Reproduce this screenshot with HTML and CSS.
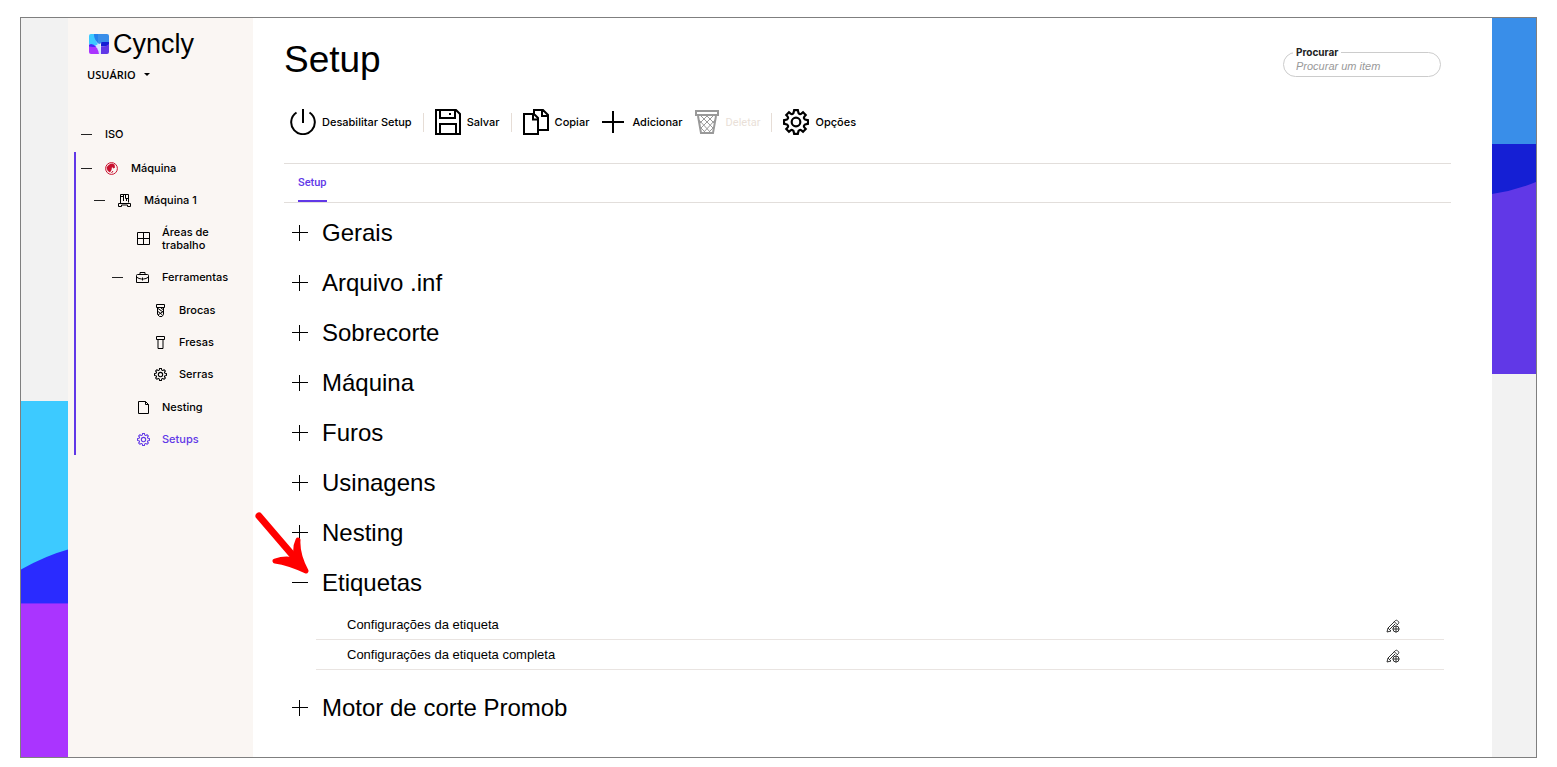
FILE: index.html
```html
<!DOCTYPE html>
<html lang="pt-BR">
<head>
<meta charset="utf-8">
<title>Setup - Cyncly</title>
<link rel="stylesheet" href="styles.css">
</head>
<body>
<svg class="sprite" aria-hidden="true">
  <symbol id="gear" viewBox="-12 -12 24 24"><path d="M-1.700 -11H1.700L2.300 -8.300Q3.600 -6.700 5 -7.700L6.500 -9L9 -6.500L7.700 -5Q6.700 -3.600 8.300 -2.300L11 -1.700V1.700L8.300 2.300Q6.700 3.600 7.700 5L9 6.500L6.500 9L5 7.700Q3.600 6.700 2.300 8.300L1.700 11H-1.700L-2.300 8.300Q-3.600 6.700 -5 7.700L-6.500 9L-9 6.500L-7.700 5Q-6.700 3.600 -8.300 2.300L-11 1.700V-1.700L-8.300 -2.300Q-6.700 -3.600 -7.700 -5L-9 -6.500L-6.500 -9L-5 -7.700Q-3.600 -6.700 -2.300 -8.300Z"/><circle r="4"/></symbol>
  <symbol id="plus" viewBox="0 0 18 18"><path d="M1 8.500H17M8.500 1V17"/></symbol>
  <symbol id="minus" viewBox="0 0 18 18"><path d="M1 8.500H17"/></symbol>
  <symbol id="edit" viewBox="0 0 14 14"><path d="M1 13L2 9L9.500 1.500Q10.500 .8 11.600 1.800L12.400 2.600Q13.200 3.600 12.400 4.600L11 6M1 13L5 12M2 9L5 12M8.300 2.700L11.300 5.700M3.500 10.500L9 5"/><circle cx="10" cy="10" r="3"/><path d="M10 6.500V13.500M6.500 10H13.500"/></symbol>
</svg>
<div class="frame">
  <div class="strip">
    <svg class="strip-art strip-art-bottom" viewBox="0 0 47 357" preserveAspectRatio="none" aria-hidden="true">
      <rect width="47" height="204" fill="#3dcaff"/><path d="M0 169Q25 155 47 149V204H0Z" fill="#2a2bff"/><rect y="203" width="47" height="154" fill="#aa34ff"/>
    </svg>
  </div>
  <aside class="sidebar">
    <div class="brand">
      <svg class="brand-mark" viewBox="0 0 20 20" aria-hidden="true">
        <path d="M2 0H8L11 9Q12 15 12 20H10L7 13L0 10V2Q0 0 2 0Z" fill="#d5e6ff"/>
        <path d="M2 0H6Q5 5 9 10L6 12L0 10V2Q0 0 2 0Z" fill="#3dcaff"/>
        <path d="M5 0H18Q20 0 20 2V9H13L10 10Q5 6 5 0Z" fill="#398ee9"/>
        <path d="M5 0H9V6L9 9Q5 5 5 0Z" fill="#2381ec"/>
        <path d="M13 8H20V11Q17 13 12 12.500V10Q12 8 13 8Z" fill="#151fd4"/>
        <path d="M12 12.500Q17 13 20 10V18Q20 20 18 20H12Z" fill="#6138e7"/>
        <path d="M0 11H4Q9 13 10 20H2Q0 20 0 18Z" fill="#aa34ff"/>
        <path d="M0 10.500Q4 9 7 13Q4 13 0 12.500Z" fill="#422bfa"/>
      </svg>
      <span class="brand-name">Cyncly</span>
    </div>
    <button class="user" type="button">USUÁRIO <span class="caret"></span></button>
    <nav class="tree" aria-label="Navegação">
      <a class="row" href="#"><span class="dash"></span><span class="label">ISO</span></a>
      <div class="group">
        <a class="row" href="#"><span class="dash"></span>
          <svg class="icon globe" viewBox="0 0 13 13" aria-hidden="true"><circle cx="6.500" cy="6.500" r="5.900"/><path class="solid" d="M7 1.500L9.500 2.500L10 5.500L8.500 6.500L7 5L6.500 8L5 10.500Q2 9 1.500 6Q3 2 7 1.500Z"/><path d="M6.500 11L8 9"/></svg>
          <span class="label">Máquina</span></a>
        <div class="level level-1">
          <a class="row" href="#"><span class="dash"></span>
            <svg class="icon" viewBox="0 0 13 13" aria-hidden="true"><path d="M2.500 9V.500H10.500V8.500M2.500 2.500H5.500M5.500 .500V7M7.500 .500V4.500H10M8.500 4.500V7M.500 12.500V9.500H12.500V12.500H9.500V11H3.500V12.500Z"/></svg>
            <span class="label">Máquina 1</span></a>
          <div class="level-2">
            <a class="row row-tall" href="#">
              <svg class="icon" viewBox="0 0 13 13" aria-hidden="true"><path d="M.500 .500H12.500V12.500H.500ZM6.500 .500V12.500M.500 6.500H12.500"/></svg>
              <span class="label">Áreas de trabalho</span></a>
            <a class="row row-open" href="#"><span class="dash"></span>
              <svg class="icon" viewBox="0 0 13 13" aria-hidden="true"><path d="M.500 4.500Q.500 3.500 1.500 3.500H11.500Q12.500 3.500 12.500 4.500V11.500H.500ZM4 3.500V1.500H9V3.500M.500 6Q3 8 5.500 8H7.500Q10 8 12.500 6M6.500 6.500V9.500"/></svg>
              <span class="label">Ferramentas</span></a>
            <div class="level level-3">
              <a class="row" href="#"><svg class="icon" viewBox="0 0 13 13" aria-hidden="true"><path d="M2.500 .500H10.500V3.500H2.500ZM3.500 3.500V10.500L5.500 12.500H8L9.500 10.500V3.500M4 4.500L9 8M4 7.500L8.500 11M7 4L9 5.500M9 7.500L4 11"/></svg><span class="label">Brocas</span></a>
              <a class="row" href="#"><svg class="icon" viewBox="0 0 13 13" aria-hidden="true"><path d="M2.500 .500H10.500V3.500H2.500ZM4 3.500V12.500H9V3.500"/></svg><span class="label">Fresas</span></a>
              <a class="row" href="#"><svg class="icon thin" aria-hidden="true"><use href="#gear"/></svg><span class="label">Serras</span></a>
            </div>
            <a class="row" href="#"><svg class="icon" viewBox="0 0 13 13" aria-hidden="true"><path d="M1.500 .500H8.500L11.500 3.500V12.500H1.500ZM8.500 .500V3.500H11.500"/></svg><span class="label">Nesting</span></a>
            <a class="row current" href="#" aria-current="page"><svg class="icon thin" aria-hidden="true"><use href="#gear"/></svg><span class="label">Setups</span></a>
          </div>
        </div>
      </div>
    </nav>
  </aside>
  <main class="main">
    <header class="header">
      <h1 class="title">Setup</h1>
      <div class="search">
        <label class="search-label" for="q">Procurar</label>
        <input class="search-input" id="q" type="text" placeholder="Procurar um item">
      </div>
    </header>
    <div class="toolbar">
      <button class="tool" type="button"><svg viewBox="0 0 26 26" aria-hidden="true"><path d="M13 0V14M6.500 3.500A11.800 11.800 0 1 0 19.500 3.500"/></svg>Desabilitar Setup</button>
      <span class="sep"></span>
      <button class="tool" type="button"><svg viewBox="0 0 26 26" aria-hidden="true"><path d="M1 1H21L25 5V25H1ZM5 1V9H20V1M5 25V15H21V25"/><path class="solid" d="M14 4H16V6H14Z"/></svg>Salvar</button>
      <span class="sep"></span>
      <button class="tool" type="button"><svg viewBox="0 0 26 26" aria-hidden="true"><path d="M1 5H11L15 9V25H1ZM10 5V10.500H15M11 5V1H20L25 6V21H15M19 1V7H25"/></svg>Copiar</button>
      <button class="tool" type="button"><svg viewBox="0 0 26 26" aria-hidden="true"><path d="M2 13H24M13 2V24"/></svg>Adicionar</button>
      <button class="tool tool-disabled" type="button" disabled><svg viewBox="0 0 26 26" aria-hidden="true"><path d="M2 2H24V6H2ZM4 7L7 24H19L22 7"/><path class="mesh" d="M7 7L20 20M13 7L21 15M5 11L17 24M6 18L12 24M19 7L6 20M13 7L5 15M21 11L9 24M20 18L14 24"/></svg>Deletar</button>
      <span class="sep"></span>
      <button class="tool" type="button"><svg aria-hidden="true"><use href="#gear"/></svg>Opções</button>
    </div>
    <div class="tabs" role="tablist"><button class="tab" type="button" role="tab" aria-selected="true">Setup</button></div>
    <section class="sections">
      <button class="section" type="button"><svg aria-hidden="true"><use href="#plus"/></svg>Gerais</button>
      <button class="section" type="button"><svg aria-hidden="true"><use href="#plus"/></svg>Arquivo .inf</button>
      <button class="section" type="button"><svg aria-hidden="true"><use href="#plus"/></svg>Sobrecorte</button>
      <button class="section" type="button"><svg aria-hidden="true"><use href="#plus"/></svg>Máquina</button>
      <button class="section" type="button"><svg aria-hidden="true"><use href="#plus"/></svg>Furos</button>
      <button class="section" type="button"><svg aria-hidden="true"><use href="#plus"/></svg>Usinagens</button>
      <button class="section" type="button"><svg aria-hidden="true"><use href="#plus"/></svg>Nesting</button>
      <div class="pointed">
        <button class="section" type="button" aria-expanded="true"><svg aria-hidden="true"><use href="#minus"/></svg>Etiquetas</button>
        <svg class="arrow" viewBox="0 0 56 62" aria-hidden="true"><path class="arrow-line" d="M4 4L40 46"/><path class="arrow-head" d="M20 49Q34 51 51 59Q42 42 43 28Q39 36 42 49Q32 45 20 49Z"/></svg>
      </div>
      <ul class="settings">
        <li class="setting"><span>Configurações da etiqueta</span><button class="edit" type="button" aria-label="Editar"><svg aria-hidden="true"><use href="#edit"/></svg></button></li>
        <li class="setting"><span>Configurações da etiqueta completa</span><button class="edit" type="button" aria-label="Editar"><svg aria-hidden="true"><use href="#edit"/></svg></button></li>
      </ul>
      <button class="section" type="button"><svg aria-hidden="true"><use href="#plus"/></svg>Motor de corte Promob</button>
    </section>
  </main>
  <div class="strip">
    <svg class="strip-art" viewBox="0 0 44 356" preserveAspectRatio="none" aria-hidden="true">
      <rect width="44" height="126" fill="#398ee9"/><rect y="126" width="44" height="60" fill="#151fd4"/><path d="M0 176Q22 173 44 164V356H0Z" fill="#6138e7"/>
    </svg>
  </div>
</div>
</body>
</html>
```
FILE: styles.css
```css
* { box-sizing: border-box; }
body { margin: 0; background: #fff; color: #000; font-family: Inter, "Liberation Sans", sans-serif; font-size: 11px; font-weight: 500; }
button { margin: 0; padding: 0; border: 0; background: none; color: inherit; font: inherit; text-align: left; }
svg { flex: none; fill: none; stroke: currentColor; }
.solid { fill: currentColor; stroke: none; }
.sprite { position: absolute; width: 0; height: 0; }
.frame { display: grid; grid-template-columns: 47px 185px minmax(0, 1fr) 44px; min-height: calc(100vh - 26px); margin: 17px 20px 9px; border: 1px solid #7f7f7f; }

.strip { display: flex; flex-direction: column; background: #f2f2f2; }
.strip-art { display: block; width: 100%; height: 356px; stroke: none; }
.strip-art-bottom { margin-top: auto; }

.sidebar { background: #faf6f3; }
.brand { display: flex; align-items: center; gap: 4px; height: 32px; margin: 10px 0 0 21px; }
.brand-mark { width: 20px; height: 20px; stroke: none; }
.brand-name { font-family: "Liberation Sans", sans-serif; font-size: 27px; font-weight: 400; line-height: 32px; }
.user { display: flex; align-items: center; gap: 8px; height: 20px; margin: 4px 0 0 19px; font-family: "Open Sans", sans-serif; font-weight: 600; }
.caret { border: 3px solid transparent; border-top-color: currentColor; border-bottom: 0; }
.tree { margin-top: 34px; }
.row { display: flex; align-items: center; gap: 13px; height: 32px; padding-left: 13px; color: inherit; text-decoration: none; line-height: 13px; }
.dash { flex: none; width: 11px; height: 1px; background: #222; }
.icon { width: 13px; height: 13px; }
.thin { stroke-width: 2; }
.globe { color: #c8102e; }
.group { margin: 2px 0 0 6px; border-left: 2px solid #6138e7; }
.group .row { padding-left: 5px; }
.level-1 .row { padding-left: 18px; }
.level-2 .row { gap: 12px; padding-left: 61px; }
.level-2 .row-open { gap: 13px; padding-left: 36px; }
.level-3 { padding: 1px 0; }
.level-2 .level-3 .row { padding-left: 78px; }
.level-2 .row-tall { height: 45px; padding-right: 30px; }
.current { color: #6138e7; }

.main { padding: 0 41px 0 31px; background: #fff; }
.header { display: flex; justify-content: space-between; align-items: flex-start; padding: 20px 10px 0 0; }
.title { margin: 0; font-family: "Liberation Sans", sans-serif; font-size: 37px; font-weight: 400; line-height: 44px; }
.search { position: relative; margin-top: 14px; }
.search-label { position: absolute; top: -6px; left: 10px; padding: 0 3px; background: #fff; color: #222; font-size: 10px; font-weight: 700; line-height: 12px; }
.search-input { display: block; width: 158px; height: 25px; padding: 2px 12px 0; border: 1px solid #ccc; border-radius: 13px; background: none; font: italic 11px "Liberation Sans", sans-serif; }
.search-input::placeholder { color: #999; }

.toolbar { display: flex; align-items: center; gap: 11px; height: 32px; margin-top: 24px; padding-left: 6px; }
.tool { display: flex; align-items: center; gap: 6px; }
.tool svg { width: 26px; height: 26px; stroke-width: 2; }
.tool-disabled { color: #e9dfd8; font-family: Roboto, sans-serif; font-weight: 400; }
.tool-disabled svg { color: #999; }
.tool .mesh { stroke-width: 1; }
.sep { width: 1px; height: 19px; background: #e6ddd6; }
.tabs { height: 40px; margin-top: 25px; padding-left: 14px; border: solid #e2dedb; border-width: 1px 0; }
.tab { height: 38px; border-bottom: 2px solid #6138e7; color: #6138e7; font-family: Roboto, sans-serif; }

.sections { padding: 5px 7px 0; }
.section { display: flex; align-items: center; gap: 13px; width: 100%; height: 50px; font-family: "Liberation Sans", sans-serif; font-size: 24px; font-weight: 400; }
.section svg { width: 18px; height: 18px; }
.pointed { position: relative; }
.pointed .arrow { position: absolute; left: -36px; top: -46px; width: 56px; height: 62px; color: red; }
.arrow-line { stroke-width: 7; stroke-linecap: round; }
.arrow-head { fill: currentColor; stroke-width: 5; stroke-linejoin: round; }
.settings { margin: 2px 0 13px 25px; padding: 0; list-style: none; font-family: "Liberation Sans", sans-serif; font-size: 13px; font-weight: 400; }
.setting { display: flex; align-items: center; justify-content: space-between; height: 30px; padding: 0 44px 0 31px; border-bottom: 1px solid #e9e4e1; }
.edit { display: flex; padding-top: 3px; color: #333; }
.edit svg { width: 14px; height: 14px; }
```
